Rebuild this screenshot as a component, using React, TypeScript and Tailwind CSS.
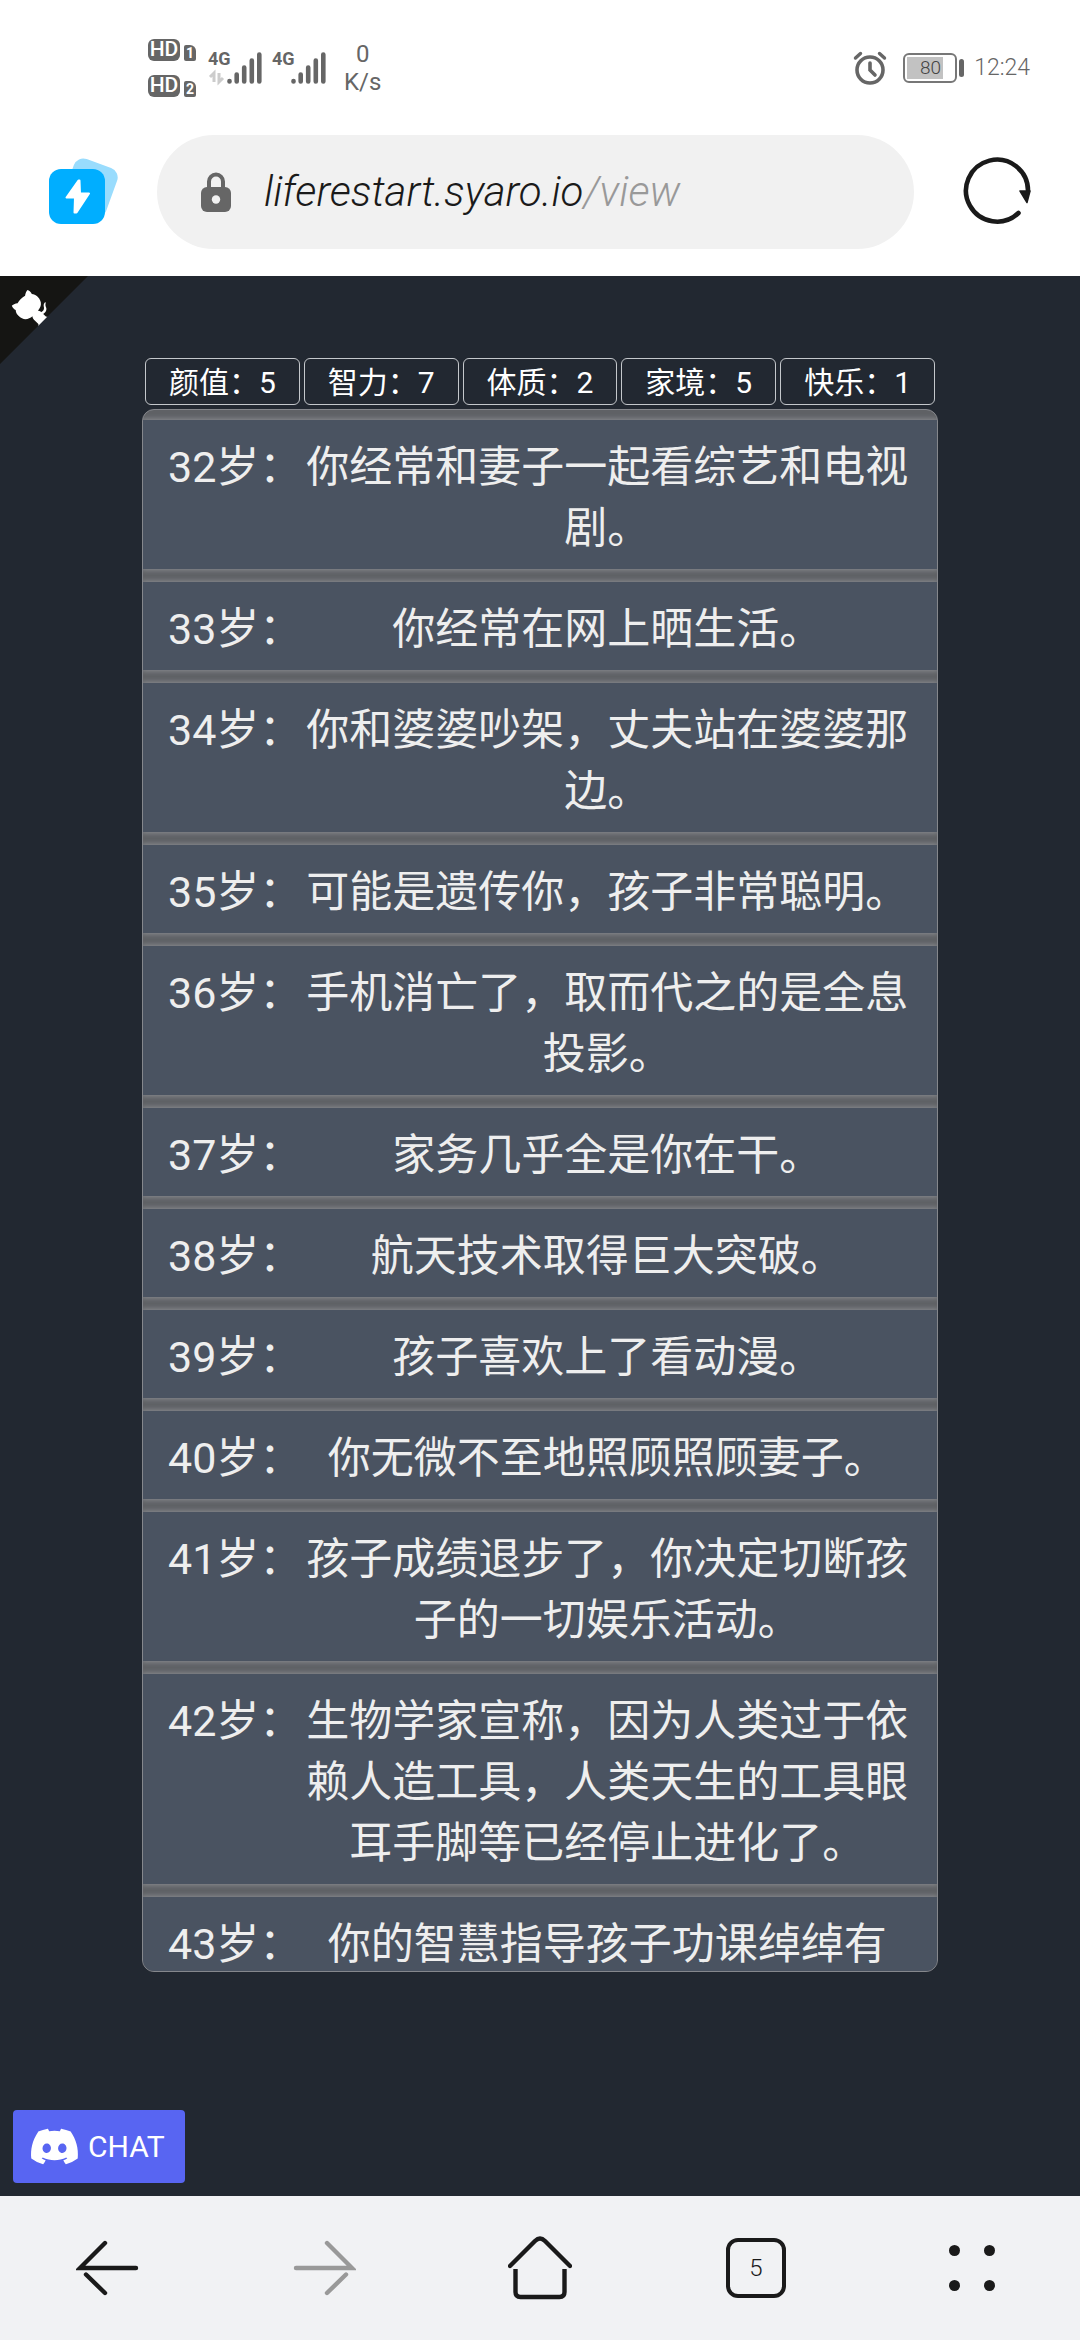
import { FaDiscord } from "react-icons/fa";

interface LifeEvent {
  age: number;
  text: string;
}

const STATS = [
  { name: "颜值", value: 5 },
  { name: "智力", value: 7 },
  { name: "体质", value: 2 },
  { name: "家境", value: 5 },
  { name: "快乐", value: 1 },
];

const EVENTS: LifeEvent[] = [
  { age: 32, text: "你经常和妻子一起看综艺和电视剧。" },
  { age: 33, text: "你经常在网上晒生活。" },
  { age: 34, text: "你和婆婆吵架，丈夫站在婆婆那边。" },
  { age: 35, text: "可能是遗传你，孩子非常聪明。" },
  { age: 36, text: "手机消亡了，取而代之的是全息投影。" },
  { age: 37, text: "家务几乎全是你在干。" },
  { age: 38, text: "航天技术取得巨大突破。" },
  { age: 39, text: "孩子喜欢上了看动漫。" },
  { age: 40, text: "你无微不至地照顾照顾妻子。" },
  { age: 41, text: "孩子成绩退步了，你决定切断孩子的一切娱乐活动。" },
  { age: 42, text: "生物学家宣称，因为人类过于依赖人造工具，人类天生的工具眼耳手脚等已经停止进化了。" },
  { age: 43, text: "你的智慧指导孩子功课绰绰有" },
];

function HdBadge({ sim }: { sim: number }) {
  return (
    <div className="flex items-end gap-1">
      <span className="flex h-[22px] w-8 items-center justify-center rounded-md bg-[#666] text-[21px] leading-none font-medium text-white">
        HD
      </span>
      <span className="flex h-4 w-3 items-center justify-center rounded-xs rounded-tr-md bg-[#666] text-[14px] leading-none font-bold text-white">
        {sim}
      </span>
    </div>
  );
}

function Signal({ arrows }: { arrows?: boolean }) {
  return (
    <div className="relative h-9 w-14">
      <span className="absolute top-0 left-0 text-[18px] leading-none font-bold">4G</span>
      <svg viewBox="0 0 56 36" className="h-full w-full" stroke="#666" strokeWidth="4.6" strokeLinecap="round">
        <path d="M21.5 31v0.4M28.7 24.5v7M36.2 17.5v14M43.8 10.5v21M51.3 4.5v27" />
        {arrows && (
          <path
            d="M6 32v-9l-4 4M11 23v9l4-4"
            fill="none"
            stroke="#ccc"
            strokeWidth="3"
            strokeLinecap="butt"
          />
        )}
      </svg>
    </div>
  );
}

function StatusBar() {
  return (
    <div className="flex h-[135px] items-center justify-between pr-[50px] pl-[148px] text-[#666]">
      <div className="flex items-center gap-2">
        <div className="flex flex-col gap-3.5">
          <HdBadge sim={1} />
          <HdBadge sim={2} />
        </div>
        <div className="flex gap-2 pl-1">
          <Signal arrows />
          <Signal />
        </div>
        <div className="pl-2 text-center text-[24px] leading-[28px]">
          <div>0</div>
          <div>K/s</div>
        </div>
      </div>
      <div className="flex items-center">
        <svg viewBox="0 0 34 34" className="mr-4 size-[34px]" fill="none" stroke="#666" strokeLinecap="round">
          <circle cx="17" cy="19" r="13" strokeWidth="3.6" />
          <path d="M17 12v7l5 5" strokeWidth="3.6" />
          <path d="M2.5 7l5-4.5M31.5 7l-5-4.5" strokeWidth="3.4" />
        </svg>
        <div className="flex h-[30px] w-[54px] rounded-md border-2 border-[#777] p-0.5">
          <div className="flex h-full w-9 items-center justify-end bg-[#c2c2c2] pr-0.5 text-[19px] leading-none font-light text-[#444]">
            80
          </div>
        </div>
        <div className="ml-0.5 h-[18px] w-[5px] rounded-sm bg-[#666]" />
        <span className="ml-2.5 text-[23px] leading-none font-light">12:24</span>
      </div>
    </div>
  );
}

function AddressBar() {
  return (
    <div className="flex items-center pr-[46px] pl-[48px]">
      <button aria-label="Quick access" className="mr-[37px]">
        <svg viewBox="0 0 72 72" className="size-[72px]">
          <rect x="19" y="6" width="46" height="52" rx="10" fill="#99dcfd" transform="rotate(20 42 32)" />
          <rect x="1" y="13" width="56" height="55" rx="12" fill="#00aeff" />
          <path
            d="M30.5 24.5 18.5 41.5h8.500l-.5 15h2l12.500-19h-9l-.5-13z"
            fill="#fff"
            stroke="#fff"
            strokeWidth="2"
            strokeLinejoin="round"
          />
        </svg>
      </button>
      <button className="flex h-[114px] flex-1 items-center rounded-full bg-[#f1f1f1] pl-[44px] text-left">
        <svg viewBox="0 0 30 40" className="mr-[33px] h-10 w-[30px]">
          <path d="M8 18V9.5a7 7 0 0 1 14 0V18" fill="none" stroke="#666" strokeWidth="4" />
          <rect y="15" width="30" height="25" rx="6" fill="#666" />
          <circle cx="15" cy="27.5" r="4.2" fill="#f1f1f1" />
        </svg>
        <span className="text-[42px] leading-none font-light text-[#1a1a1a] italic">
          liferestart.syaro.io<span className="text-[#999]">/view</span>
        </span>
      </button>
      <button aria-label="Reload" className="ml-[48px]">
        <svg viewBox="0 0 72 72" className="size-[72px]">
          <path d="M56.5 57A31 31 0 1 1 66 35" fill="none" stroke="#1a1a1a" strokeWidth="4.6" strokeLinecap="round" />
          <path d="M58 35h10l-3 11.5z" fill="#1a1a1a" stroke="#1a1a1a" strokeWidth="1.5" strokeLinejoin="round" />
        </svg>
      </button>
    </div>
  );
}

function GithubCorner() {
  return (
    <a href="#github" aria-label="View source on GitHub" className="absolute top-0 left-0">
      <svg viewBox="0 0 250 250" className="size-[88px] -scale-x-100">
        <path d="M0,0 L115,115 L130,115 L142,142 L250,250 L250,0 Z" fill="#151513" />
        <g fill="#fff">
          <path d="M128.3,109.0 C113.8,99.7 119.0,89.6 119.0,89.6 C122.0,82.7 120.5,78.6 120.5,78.6 C119.2,72.0 123.4,76.3 123.4,76.3 C127.3,80.9 125.5,87.3 125.5,87.3 C122.9,97.6 130.6,101.9 134.4,103.2" />
          <path d="M115.0,115.0 C114.9,115.1 118.7,116.5 119.8,115.4 L133.7,101.6 C136.9,99.2 139.9,98.4 142.2,98.6 C133.8,88.0 127.5,74.4 143.8,58.0 C148.5,53.4 154.0,51.2 159.7,51.0 C160.3,49.4 163.2,43.6 171.4,40.1 C171.4,40.1 176.1,42.5 178.8,56.2 C183.1,58.6 187.2,61.8 190.9,65.4 C194.5,69.0 197.7,73.2 200.1,77.6 C213.8,80.2 216.3,84.9 216.3,84.9 C212.7,93.1 206.9,96.0 205.4,96.6 C205.1,102.4 203.0,107.8 198.3,112.5 C181.9,128.9 168.3,122.5 157.7,114.1 C157.9,116.9 156.7,120.9 152.7,124.9 L141.0,136.5 C139.8,137.7 141.6,141.9 141.8,141.8 Z" />
        </g>
      </svg>
    </a>
  );
}

function EventRow({ age, text }: LifeEvent) {
  return (
    <li className="flex shrink-0 bg-[#4a5361] px-[25px] pt-[17px] pb-2.5 shadow-[0_0_5px_1px_#8b8d92]">
      <span className="shrink-0">{age}岁：</span>
      <span className="flex-1 text-center">{text}</span>
    </li>
  );
}

function BottomNav() {
  return (
    <nav className="grid h-36 shrink-0 grid-cols-5 place-items-center bg-[#f1f2f4]">
      <button aria-label="Back">
        <svg viewBox="0 0 64 64" className="size-16" fill="none" stroke="#1a1a1a" strokeWidth="4.4" strokeLinecap="round">
          <path d="M60 32H4L29 7" />
          <path d="M10 38.5l19 18.500" />
        </svg>
      </button>
      <button aria-label="Forward">
        <svg viewBox="0 0 64 64" className="size-16" fill="none" stroke="#999" strokeWidth="4.4" strokeLinecap="round">
          <path d="M4 32h56L35 7" />
          <path d="M54 38.5L35 57" />
        </svg>
      </button>
      <button aria-label="Home">
        <svg viewBox="0 0 64 64" className="size-16" fill="none" stroke="#1a1a1a" strokeWidth="4.4" strokeLinecap="round">
          <path d="M2 30L27 5q5-5 10 0l25 25" />
          <path d="M7.5 33v23q0 5 5 5h39q5 0 5-5V33" strokeLinecap="butt" />
        </svg>
      </button>
      <button
        aria-label="Tabs"
        className="flex size-[60px] items-center justify-center rounded-xl border-4 border-[#1a1a1a] text-[24px] leading-none font-light text-[#1a1a1a]"
      >
        5
      </button>
      <button aria-label="Menu" className="grid grid-cols-2 gap-6">
        <i className="size-[11px] rounded-full bg-[#1a1a1a]" />
        <i className="size-[11px] rounded-full bg-[#1a1a1a]" />
        <i className="size-[11px] rounded-full bg-[#1a1a1a]" />
        <i className="size-[11px] rounded-full bg-[#1a1a1a]" />
      </button>
    </nav>
  );
}

export default function App() {
  return (
    <div className="flex h-screen flex-col bg-white font-['Roboto','Noto_Sans_CJK_SC',sans-serif]">
      <header className="h-[276px] shrink-0">
        <StatusBar />
        <AddressBar />
      </header>

      <main className="relative flex min-h-0 flex-1 flex-col bg-[#222831] px-[142px] pt-[82px] pb-[224px]">
        <GithubCorner />
        <ul className="mx-[3px] grid grid-cols-5 gap-1 text-center text-[30px] leading-[42px] text-white">
          {STATS.map((s) => (
            <li key={s.name} className="rounded-md border border-[#c4c7cb] pt-[3px]">
              {s.name}：{s.value}
            </li>
          ))}
        </ul>
        <ul className="mt-1 flex min-h-0 flex-1 flex-col gap-[13px] overflow-hidden rounded-xl border border-[#85878c] bg-[#5f6165] pt-2.5 text-[43px] leading-[61px] text-[#eee]">
          {EVENTS.map((e) => (
            <EventRow key={e.age} age={e.age} text={e.text} />
          ))}
        </ul>
        <a
          href="#chat"
          className="absolute bottom-[13px] left-[13px] flex h-[73px] w-[172px] items-center gap-2 rounded-sm bg-[#5865f2] pl-4 text-[30px] text-white"
        >
          <FaDiscord className="size-[51px]" />
          CHAT
        </a>
      </main>

      <BottomNav />
    </div>
  );
}
